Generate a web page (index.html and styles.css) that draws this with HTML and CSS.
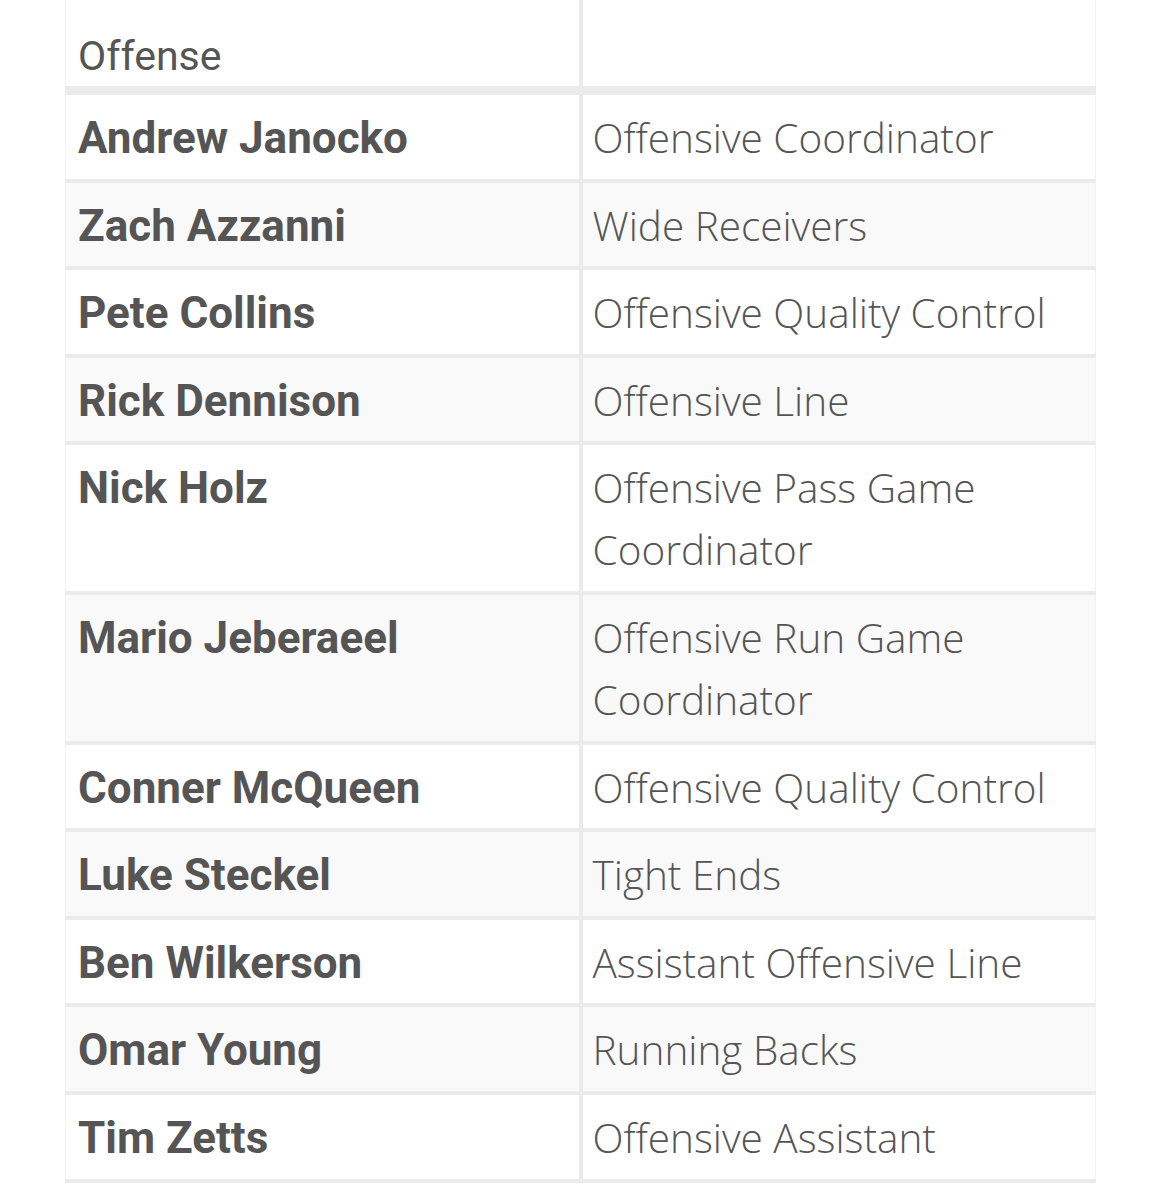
FILE: index.html
```html
<!DOCTYPE html>
<html>
<head>
<meta charset="utf-8">
<link rel="stylesheet" href="styles.css">
</head>
<body>
<table class="staff">
  <thead>
    <tr><th class="group">Offense</th><th class="group"></th></tr>
  </thead>
  <tbody>
    <tr><td class="name">Andrew Janocko</td><td class="role">Offensive Coordinator</td></tr>
    <tr><td class="name">Zach Azzanni</td><td class="role">Wide Receivers</td></tr>
    <tr><td class="name">Pete Collins</td><td class="role">Offensive Quality Control</td></tr>
    <tr><td class="name">Rick Dennison</td><td class="role">Offensive Line</td></tr>
    <tr><td class="name">Nick Holz</td><td class="role">Offensive Pass Game Coordinator</td></tr>
    <tr><td class="name">Mario Jeberaeel</td><td class="role">Offensive Run Game Coordinator</td></tr>
    <tr><td class="name">Conner McQueen</td><td class="role">Offensive Quality Control</td></tr>
    <tr><td class="name">Luke Steckel</td><td class="role">Tight Ends</td></tr>
    <tr><td class="name">Ben Wilkerson</td><td class="role">Assistant Offensive Line</td></tr>
    <tr><td class="name">Omar Young</td><td class="role">Running Backs</td></tr>
    <tr><td class="name">Tim Zetts</td><td class="role">Offensive Assistant</td></tr>
  </tbody>
</table>
</body>
</html>
```
FILE: styles.css
```css
html, body {
  margin: 0;
  padding: 0;
  background: #ffffff;
}
.staff {
  margin-left: 65px;
  width: 1031px;
  border-collapse: collapse;
  table-layout: fixed;
  color: #555555;
  border-left: 1px solid #f3f3f3;
  border-right: 1px solid #f3f3f3;
}
.staff th, .staff td {
  text-align: left;
  vertical-align: top;
  padding: 12px 12px 9.6px 12px;
  line-height: 62px;
  border-bottom: 4px solid #ebebeb;
}
.staff th:first-child, .staff td:first-child {
  border-right: 4px solid #ebebeb;
}
.staff th.group {
  font-family: Roboto, "Liberation Sans", sans-serif;
  font-weight: 400;
  font-size: 41px;
  padding-top: 26px;
  padding-bottom: 0;
  line-height: 60px;
  border-bottom: 9px solid #ebebeb;
  background: #ffffff;
}
.staff tbody tr:nth-child(odd) td {
  background: #ffffff;
}
.staff tbody tr:nth-child(even) td {
  background: #f9f9f9;
}
.name {
  font-family: Roboto, "Liberation Sans", sans-serif;
  font-weight: 700;
  font-size: 44px;
}
.staff td.role {
  font-family: "Open Sans", "Noto Sans", sans-serif;
  font-weight: 300;
  font-size: 40.5px;
  padding-left: 10px;
}
```
